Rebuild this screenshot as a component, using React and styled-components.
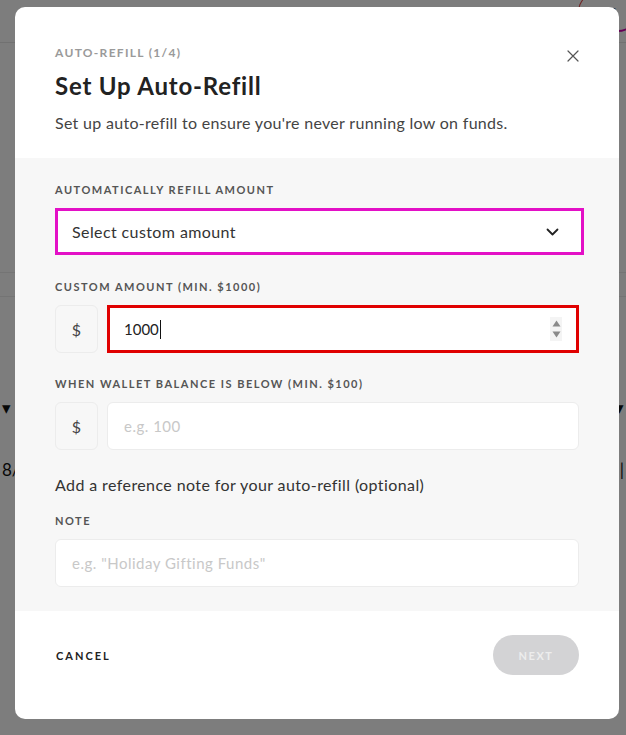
import React from "react";
import styled, { createGlobalStyle } from "styled-components";

const Global = createGlobalStyle`
  html, body { margin: 0; padding: 0; }
  body {
    font-family: Lato, "Open Sans", "Liberation Sans", sans-serif;
    background: #fff;
    width: 626px;
    height: 735px;
    overflow: hidden;
  }
  * { box-sizing: border-box; }
`;

const Page = styled.div`
  position: relative;
  width: 626px;
  height: 735px;
  background: #fbfbfb;
  overflow: hidden;
`;

const PageHeader = styled.div`
  height: 43px;
  border-bottom: 1px solid #e2e2e2;
  display: flex;
  justify-content: flex-end;
  align-items: flex-start;
`;

const PageHeaderTag = styled.div`
  margin-top: -8px;
  margin-right: -12px;
  width: 60px;
  height: 40px;
  border-radius: 20px;
  border: 1px solid #d44;
  border-bottom: 2px solid #c0a;
  font-size: 15px;
  color: #222;
  padding: 8px 0 0 30px;
`;

const PageRow = styled.div`
  height: ${(p) => p.$h}px;
  border-bottom: 1px solid ${(p) => (p.$line ? "#e8e8e8" : "transparent")};
  display: flex;
  justify-content: space-between;
  align-items: center;
  padding: 0 2px;
  font-size: 17px;
  color: #111;
`;

const Overlay = styled.div`
  position: absolute;
  inset: 0;
  background: rgba(0, 0, 0, 0.5);
`;

const Modal = styled.div`
  position: absolute;
  top: 7px;
  left: 15px;
  width: 604px;
  height: 712px;
  background: #fff;
  border-radius: 10px;
  overflow: hidden;
  display: flex;
  flex-direction: column;
`;

const Header = styled.div`
  position: relative;
  padding: 38px 40px 24px;
  display: flex;
  flex-direction: column;
`;

const Eyebrow = styled.div`
  font-size: 12px;
  line-height: 16px;
  font-weight: 700;
  letter-spacing: 1.3px;
  color: #9a9a9a;
`;

const Title = styled.h1`
  margin: 10px 0 0;
  font-size: 24px;
  line-height: 30px;
  font-weight: 700;
  color: #222;
  letter-spacing: 0.8px;
`;

const Subtitle = styled.p`
  margin: 11px 0 0;
  font-size: 16px;
  line-height: 22px;
  color: #444;
  letter-spacing: 0.3px;
`;

const CloseButton = styled.button`
  position: absolute;
  top: 42px;
  right: 39px;
  width: 14px;
  height: 14px;
  padding: 0;
  border: 0;
  background: none;
  display: flex;
  align-items: center;
  justify-content: center;
`;

const Body = styled.div`
  background: #f7f7f7;
  padding: 24px 40px 24px;
  display: flex;
  flex-direction: column;
`;

const Label = styled.div`
  font-size: 11px;
  line-height: 16px;
  font-weight: 700;
  letter-spacing: 1.5px;
  color: #555;
  margin-top: ${(p) => p.$mt || 0}px;
  margin-bottom: 10px;
`;

const SelectBox = styled.div`
  height: 47px;
  margin-right: -5px;
  background: #fff;
  border: 3px solid #e310c6;
  display: flex;
  align-items: center;
  justify-content: space-between;
  padding: 0 22px 0 14px;
  font-size: 16px;
  letter-spacing: 0.4px;
  color: #333;
`;

const InputRow = styled.div`
  display: flex;
  gap: 9px;
  height: 48px;
`;

const Prefix = styled.div`
  width: 43px;
  flex: none;
  border: 1px solid #ececec;
  border-radius: 6px;
  display: flex;
  align-items: center;
  justify-content: center;
  font-size: 16px;
  color: #444;
`;

const Field = styled.div`
  flex: ${(p) => (p.$block ? "none" : 1)};
  height: ${(p) => p.$h || 48}px;
  background: #fff;
  border: ${(p) => (p.$active ? "3px solid #e00000" : "1px solid #ececec")};
  border-radius: ${(p) => (p.$active ? 0 : 6)}px;
  display: flex;
  align-items: center;
  justify-content: space-between;
  padding: 0 ${(p) => (p.$active ? 14 : 16)}px;
  font-size: 15px;
  letter-spacing: ${(p) => (p.$placeholder ? 0.5 : 0)}px;
  color: ${(p) => (p.$placeholder ? "#c8c8c8" : "#222")};
`;

const Value = styled.span`
  display: flex;
  align-items: center;
`;

const Caret = styled.span`
  display: inline-block;
  width: 1px;
  height: 19px;
  background: #111;
  margin-left: 1px;
`;

const Spinner = styled.div`
  width: 12px;
  height: 24px;
  background: #f4f4f4;
  display: flex;
  flex-direction: column;
  align-items: center;
  justify-content: center;
  gap: 4px;
`;

const Helper = styled.p`
  margin: 24px 0 0;
  font-size: 16px;
  line-height: 22px;
  letter-spacing: 0.4px;
  color: #333;
`;

const Footer = styled.div`
  flex: 1;
  padding: 24px 40px 0 41px;
  display: flex;
  justify-content: space-between;
  align-items: flex-start;
`;

const TextButton = styled.button`
  border: 0;
  background: none;
  padding: 0;
  height: 40px;
  font-family: inherit;
  font-size: 11px;
  font-weight: 700;
  letter-spacing: 2px;
  color: #222;
`;

const PillButton = styled.button`
  width: 86px;
  height: 40px;
  border: 0;
  border-radius: 20px;
  background: #d3d3d5;
  color: #ededed;
  font-family: inherit;
  font-size: 11px;
  font-weight: 700;
  letter-spacing: 1.5px;
`;

const Chevron = () => (
  <svg width="13" height="8" viewBox="0 0 13 8" fill="none">
    <path d="M1.5 1.5 L6.5 6.5 L11.5 1.5" stroke="#222" strokeWidth="1.8" strokeLinecap="round" strokeLinejoin="round" />
  </svg>
);

const CloseIcon = () => (
  <svg width="12" height="12" viewBox="0 0 12 12" fill="none">
    <path d="M1 1 L11 11 M11 1 L1 11" stroke="#555" strokeWidth="1.2" strokeLinecap="round" />
  </svg>
);

const Tri = ({ up }) => (
  <svg width="9" height="7" viewBox="0 0 9 7">
    <path d={up ? "M4.5 0.5 L8.5 6.5 L0.5 6.5 Z" : "M0.5 0.5 L8.5 0.5 L4.5 6.5 Z"} fill="#8a8a8a" />
  </svg>
);

export default function App() {
  return (
    <>
      <Global />
      <Page>
        <PageHeader>
          <PageHeaderTag>c</PageHeaderTag>
        </PageHeader>
        <PageRow $h={230} $line />
        <PageRow $h={24} $line />
        <PageRow $h={83} />
        <PageRow $h={56}>
          <span>▾</span>
          <span>▾</span>
        </PageRow>
        <PageRow $h={68}>
          <span>8/</span>
          <span>|</span>
        </PageRow>
        <Overlay />
        <Modal role="dialog">
          <Header>
            <Eyebrow>AUTO-REFILL (1/4)</Eyebrow>
            <Title>Set Up Auto-Refill</Title>
            <Subtitle>Set up auto-refill to ensure you're never running low on funds.</Subtitle>
            <CloseButton aria-label="Close">
              <CloseIcon />
            </CloseButton>
          </Header>
          <Body>
            <Label>AUTOMATICALLY REFILL AMOUNT</Label>
            <SelectBox>
              <span>Select custom amount</span>
              <Chevron />
            </SelectBox>

            <Label $mt={24}>CUSTOM AMOUNT (MIN. $1000)</Label>
            <InputRow>
              <Prefix>$</Prefix>
              <Field $active>
                <Value>
                  1000
                  <Caret />
                </Value>
                <Spinner>
                  <Tri up />
                  <Tri />
                </Spinner>
              </Field>
            </InputRow>

            <Label $mt={23}>WHEN WALLET BALANCE IS BELOW (MIN. $100)</Label>
            <InputRow>
              <Prefix>$</Prefix>
              <Field $placeholder>e.g. 100</Field>
            </InputRow>

            <Helper>Add a reference note for your auto-refill (optional)</Helper>

            <Label $mt={17}>NOTE</Label>
            <Field $placeholder $block>e.g. "Holiday Gifting Funds"</Field>
          </Body>
          <Footer>
            <TextButton>CANCEL</TextButton>
            <PillButton disabled>NEXT</PillButton>
          </Footer>
        </Modal>
      </Page>
    </>
  );
}
